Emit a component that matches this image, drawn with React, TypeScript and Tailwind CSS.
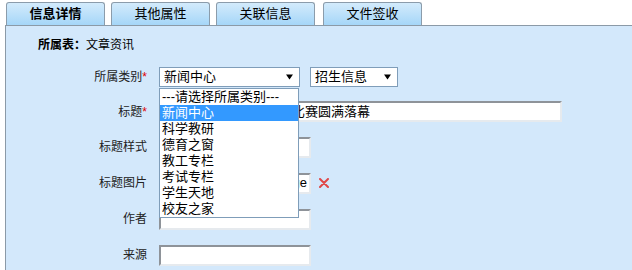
import React from 'react';

const tabs = ['信息详情', '其他属性', '关联信息', '文件签收'];
const options = ['---请选择所属类别---', '新闻中心', '科学教研', '德育之窗', '教工专栏', '考试专栏', '学生天地', '校友之家'];

function Caret() {
  return (
    <svg width="7" height="6" viewBox="0 0 7 6" className="shrink-0">
      <path d="M0 0.5 H7 L3.5 5.5 Z" fill="#000" />
    </svg>
  );
}

function TextBox({ w = 'w-[152px]', children }: { w?: string; children?: React.ReactNode }) {
  return (
    <div
      className={`${w} h-[21px] bg-white border-2 border-t-[#8e9399] border-l-[#8e9399] border-r-[#e6eaee] border-b-[#e6eaee] flex items-center px-[1px] overflow-hidden whitespace-nowrap text-[13px] text-black`}
    >
      {children}
    </div>
  );
}

function Row({ label, required, h, children }: { label: string; required?: boolean; h: string; children: React.ReactNode }) {
  return (
    <div className={`flex items-center ${h}`}>
      <div className="w-[142px] text-right text-[12px] text-[#222] pr-[1px]">
        {label}
        {required && <span className="text-[#d00]">*</span>}
      </div>
      <div className="ml-[11px] flex items-center">{children}</div>
    </div>
  );
}

export default function App() {
  return (
    <div
      className="w-[632px] h-[270px] bg-white overflow-hidden"
      style={{ fontFamily: '"Liberation Sans", "Noto Sans CJK SC", sans-serif' }}
    >
      {/* 标签页 */}
      <div className="flex items-end h-[25px] pl-[6px] pt-[2px]">
        {tabs.map((t, i) => (
          <div
            key={t}
            className={`h-[23px] w-[99px] ${i === 0 ? '' : i === 3 ? 'ml-[8px]' : 'ml-[6px]'} rounded-t-[3px] border border-b-0 border-[#8b9cab] bg-gradient-to-b from-[#d3ebfc] to-[#a5d6f8] flex items-center justify-center text-[13px] text-black ${i === 0 ? 'font-bold' : ''}`}
          >
            {t}
          </div>
        ))}
      </div>

      {/* 内容区 */}
      <div className="h-[245px] bg-[#d3e8fb] border-t border-l border-[#8b9aa7] ml-[5px]">
        <div className="h-[33px] flex items-center pl-[32px] pt-[4px] text-[12px] text-black">
          <span className="font-bold">所属表：</span>
          <span>文章资讯</span>
        </div>

        <Row label="所属类别" required h="h-[35px]">
          <div className="relative">
            <div className="w-[141px] h-[20px] bg-white border border-[#7f9db9] flex items-center justify-between pl-[4px] pr-[6px] text-[13px] text-black">
              <span>新闻中心</span>
              <Caret />
            </div>
            <div className="absolute left-0 top-[21px] w-[140px] z-10 bg-white border border-[#7f9db9] text-[13px] text-black">
              {options.map((o, i) => (
                <div
                  key={o}
                  className={`h-[16px] leading-[16px] pl-[2px] whitespace-nowrap ${i === 1 ? 'bg-[#3399ff] text-white' : ''}`}
                >
                  {o}
                </div>
              ))}
            </div>
          </div>
          <div className="ml-[10px] w-[88px] h-[20px] bg-white border border-[#7f9db9] flex items-center justify-between pl-[4px] pr-[6px] text-[13px] text-black">
            <span>招生信息</span>
            <Caret />
          </div>
        </Row>

        <Row label="标题" required h="h-[35px]">
          <TextBox w="w-[403px]">我校第十二届校园篮球比赛圆满落幕</TextBox>
        </Row>

        <Row label="标题样式" h="h-[36px]">
          <TextBox />
        </Row>

        <Row label="标题图片" h="h-[36px]">
          <TextBox>
            <span className="ml-auto pr-[1px]">/images/noimage</span>
          </TextBox>
          <svg width="10" height="10" viewBox="0 0 10 10" className="ml-[8px]">
            <path d="M1 1 L9 9 M9 1 L1 9" stroke="#e04848" strokeWidth="2" strokeLinecap="round" />
          </svg>
        </Row>

        <Row label="作者" h="h-[36px]">
          <TextBox />
        </Row>

        <Row label="来源" h="h-[36px]">
          <TextBox />
        </Row>
      </div>
    </div>
  );
}
